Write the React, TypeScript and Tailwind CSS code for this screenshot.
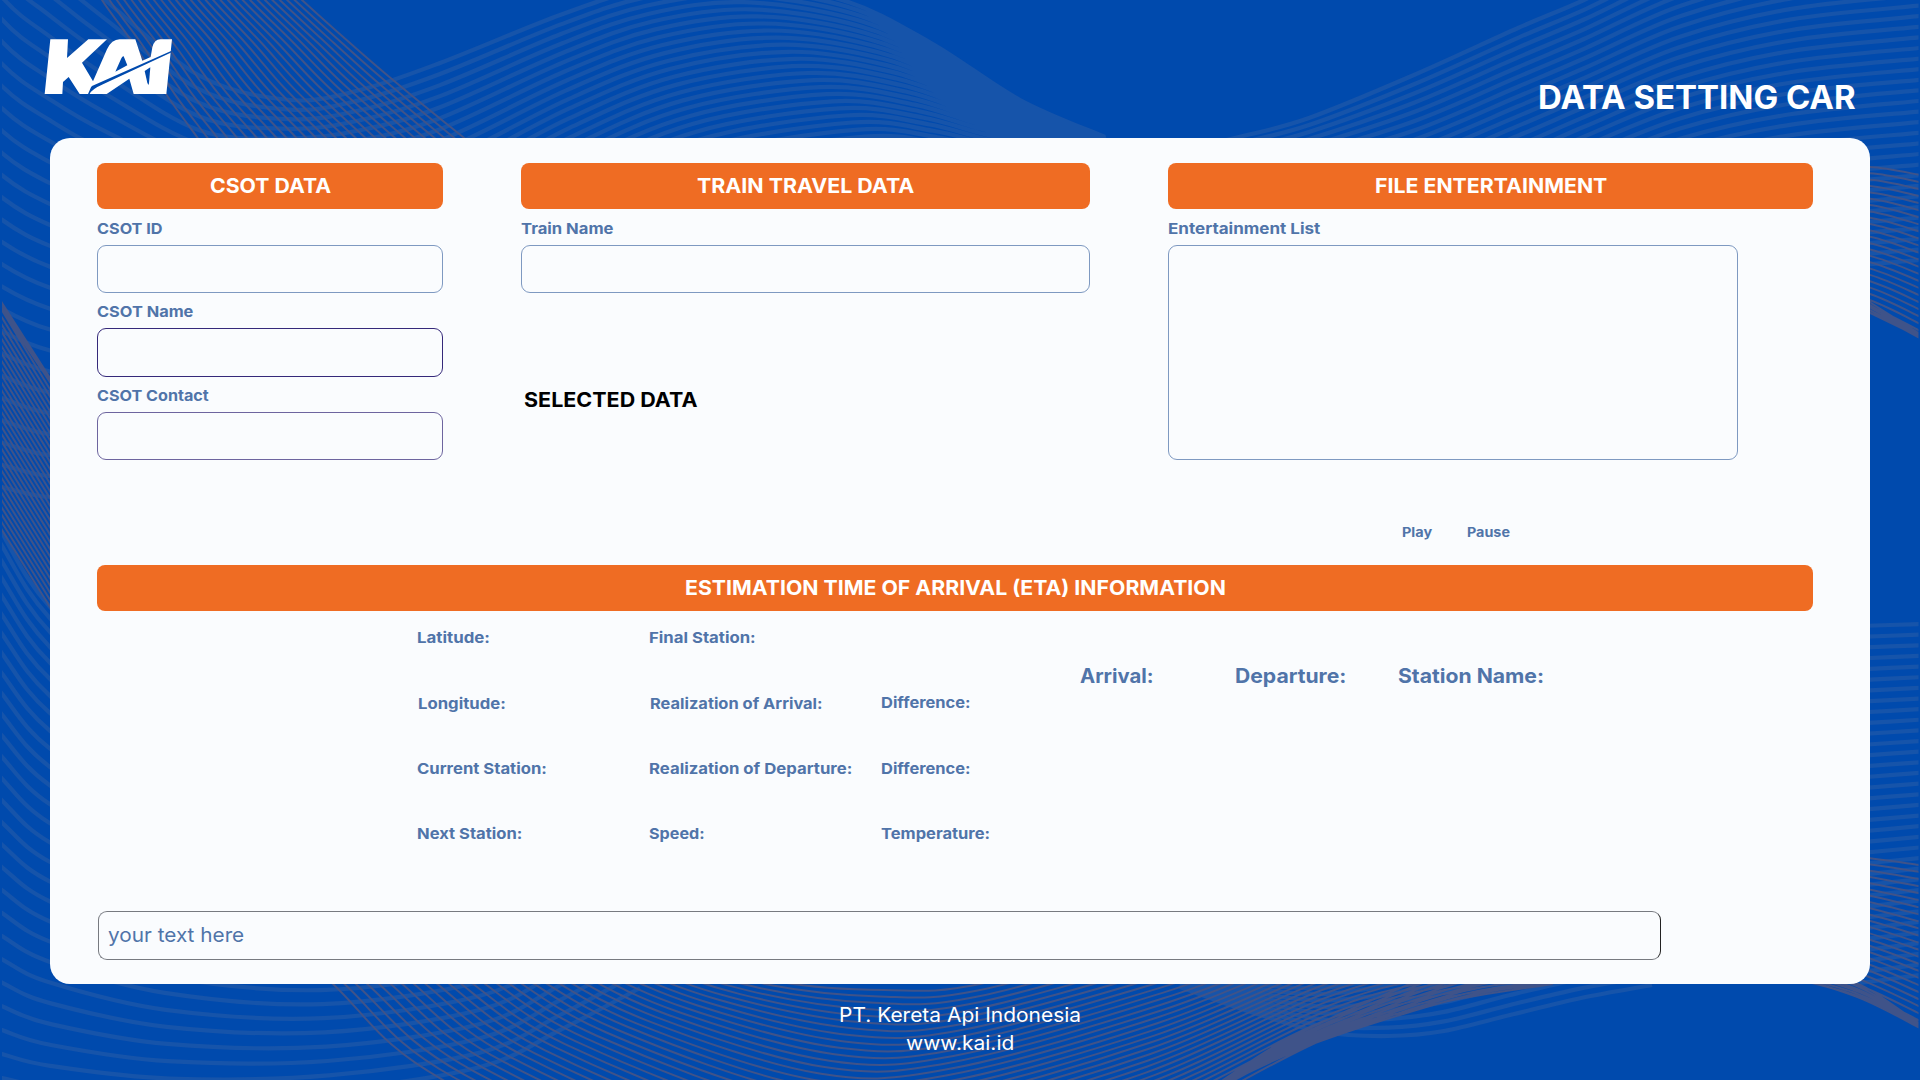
import { useLayoutEffect, useRef } from "react";
import type { ReactNode } from "react";

type Pt = [number, number];

/** Stretches a single line of text so that it fills the width of its box. */
function Fit({ className = "", children }: { className?: string; children: ReactNode }) {
  const box = useRef<HTMLSpanElement>(null);
  const ink = useRef<HTMLSpanElement>(null);
  useLayoutEffect(() => {
    if (!box.current || !ink.current) return;
    const natural = ink.current.offsetWidth;
    if (natural) ink.current.style.transform = `scaleX(${box.current.offsetWidth / natural})`;
  }, []);
  return (
    <span ref={box} className={`block shrink-0 whitespace-nowrap ${className}`}>
      <span ref={ink} className="inline-block origin-left">
        {children}
      </span>
    </span>
  );
}

/** Smooth path through the given points. */
function spline(p: Pt[]): string {
  let d = `M${p[0][0].toFixed(1)} ${p[0][1].toFixed(1)}`;
  for (let i = 0; i < p.length - 1; i++) {
    const a = p[Math.max(i - 1, 0)];
    const b = p[i];
    const c = p[i + 1];
    const e = p[Math.min(i + 2, p.length - 1)];
    d += `C${(b[0] + (c[0] - a[0]) / 6).toFixed(1)} ${(b[1] + (c[1] - a[1]) / 6).toFixed(1)} ${(c[0] - (e[0] - b[0]) / 6).toFixed(1)} ${(c[1] - (e[1] - b[1]) / 6).toFixed(1)} ${c[0].toFixed(1)} ${c[1].toFixed(1)}`;
  }
  return d;
}

/** A family of n + 1 curves blended from curve a to curve b. */
function family(a: Pt[], b: Pt[], n: number, ease = 1): string {
  let d = "";
  for (let i = 0; i <= n; i++) {
    const t = Math.pow(i / n, ease);
    d += spline(a.map((q, k): Pt => [q[0] + (b[k][0] - q[0]) * t, q[1] + (b[k][1] - q[1]) * t]));
  }
  return d;
}

const GRAY = [
  family(
    [[-60, -190], [2, -92], [50, -47], [105, 0], [200, 76], [290, 100], [360, 90], [440, 63], [560, 15], [640, -10], [725, -19], [842, 0], [931, 43], [1020, 100], [1105, 137]],
    [[-60, 472], [2, 487], [50, 497], [110, 490], [200, 430], [290, 350], [360, 352], [440, 350], [580, 260], [720, 195], [890, 165], [960, 170], [1010, 175], [1060, 165], [1110, 160]],
    26,
  ),
  family(
    [[1180, 150], [1239, 137], [1309, 118], [1414, 75], [1518, 28], [1584, 0], [1680, -45], [1790, -75], [1920, -90]],
    [[1180, 340], [1239, 337], [1309, 348], [1414, 380], [1518, 351], [1584, 322], [1680, 292], [1790, 272], [1920, 260]],
    33,
  ),
  family(
    [[-40, 450], [2, 533], [50, 607], [150, 700], [300, 760], [480, 740], [560, 690], [640, 620]],
    [[-40, 1068], [2, 1078], [50, 1087], [170, 1096], [330, 1090], [480, 1067], [560, 1030], [640, 988]],
    26,
    1.15,
  ),
  family(
    [[1180, 955], [1251, 975], [1322, 975], [1388, 960], [1444, 945], [1510, 925], [1581, 912], [1652, 905]],
    [[1180, 987], [1251, 1012], [1322, 1032], [1388, 1036], [1444, 1031], [1510, 1015], [1581, 998], [1652, 985]],
    9,
  ),
  family([[1860, 626], [1920, 624]], [[1860, 983], [1920, 975]], 33),
];

const BROWN = [
  family(
    [[80, -40], [102, 0], [133, 43], [168, 97], [197, 137], [220, 170]],
    [[260, -40], [302, 0], [350, 43], [393, 80], [463, 137], [500, 165]],
    27,
  ),
  family([[-10, 283], [2, 303], [50, 382], [70, 412]], [[-10, 510], [2, 530], [50, 607], [70, 640]], 31),
  family([[2, 303], [50, 378]], [[2, 310], [50, 382]], 3),
  family(
    [[560, 900], [680, 955], [780, 982], [884, 990], [980, 984], [1180, 930], [1322, 890], [1440, 870], [1600, 860]],
    [[240, 890], [333, 984], [443, 1080], [720, 1202], [900, 1200], [1130, 1135], [1322, 1040], [1440, 1003], [1553, 984]],
    33,
  ),
  family(
    [[1180, 1110], [1270, 1049], [1340, 1014], [1405, 986], [1450, 965]],
    [[1200, 1096], [1300, 1049], [1400, 1015], [1480, 993], [1553, 983]],
    9,
  ),
  family([[1810, 170], [1870, 167], [1920, 175]], [[1810, 296], [1870, 313], [1920, 338]], 23),
  family([[1860, 296], [1920, 334]], [[1860, 308], [1920, 337]], 4),
  family([[1790, 850], [1860, 857], [1920, 865]], [[1790, 975], [1860, 998], [1920, 1028]], 23),
  family([[1830, 972], [1870, 990], [1920, 1024]], [[1800, 980], [1860, 997], [1920, 1027]], 5),
];

function Waves() {
  return (
    <svg className="absolute inset-0" width="1920" height="1080" viewBox="0 0 1920 1080" fill="none">
      <clipPath id="inset">
        <rect x="2" y="0" width="1916.5" height="1080" />
      </clipPath>
      <g clipPath="url(#inset)">
        <path d={GRAY.join("")} stroke="#1654aa" strokeWidth="4.2" />
        <path d={BROWN.join("")} stroke="#3f5389" strokeWidth="2" />
      </g>
    </svg>
  );
}

function Logo() {
  return (
    <svg width="132" height="60" viewBox="40 35 396 180" aria-label="KAI">
      <path
        fill="#fff"
        d="M62 42H115L112 98L176 42H232L157 112L190 168L232 72Q246 42 270 42H317L338 106L363 95L368 66Q374 42 392 42H427L410 206H312L299 160L231 206H150L117 155L100 170L98 206H45Z"
      />
      <path fill="#004aad" d="M282 93L293 120L257 139L274 101Q278 91 282 93Z" />
      <path fill="#004aad" d="M345 137L362 126L358 173Q357 184 353 172Z" />
      <path fill="#004aad" d="M175 206L184 186Q186 182 192 180L426 76V81L220 177Q186 192 180 206Z" />
    </svg>
  );
}

function Banner({ fit, children }: { fit: string; children: ReactNode }) {
  return (
    <h2 className="flex h-[46px] w-full items-center justify-center rounded-lg bg-[#ef6c23] text-[20px] font-bold text-white">
      <Fit className={fit}>{children}</Fit>
    </h2>
  );
}

function Field({ label, fit, box, first = false }: { label: string; fit: string; box: string; first?: boolean }) {
  return (
    <label className="block text-[15px] font-bold text-[#5074a9]">
      <span className={`flex items-center ${first ? "h-[36px] pt-1" : "h-[35px] pt-[3px]"}`}>
        <Fit className={fit}>{label}</Fit>
      </span>
      <span className={`block rounded-[9px] border ${box}`} />
    </label>
  );
}

const ETA = [
  ["Latitude:", "w-[73px]", "col-start-1 row-start-1"],
  ["Final Station:", "w-[107px]", "col-start-2 row-start-1"],
  ["Longitude:", "w-[88px]", "col-start-1 row-start-2 pl-px pt-px"],
  ["Realization of Arrival:", "w-[173px]", "col-start-2 row-start-2 pl-px pt-px"],
  ["Difference:", "w-[90px]", "col-start-3 row-start-2"],
  ["Current Station:", "w-[130px]", "col-start-1 row-start-3"],
  ["Realization of Departure:", "w-[203px]", "col-start-2 row-start-3"],
  ["Difference:", "w-[90px]", "col-start-3 row-start-3"],
  ["Next Station:", "w-[105px]", "col-start-1 row-start-4"],
  ["Speed:", "w-[56px]", "col-start-2 row-start-4"],
  ["Temperature:", "w-[109px]", "col-start-3 row-start-4"],
];

export default function App() {
  return (
    <div className="relative h-[1080px] w-[1920px] overflow-hidden bg-[#004aad] font-['Inter',sans-serif]">
      <Waves />
      <div className="relative flex h-full flex-col">
        <header className="flex h-[138px] items-start justify-between pl-[43px] pr-[64px] pt-[37px]">
          <Logo />
          <h1 className="pt-[40px] text-[32px] font-bold leading-[42px] text-white">
            <Fit className="w-[318px]">DATA SETTING CAR</Fit>
          </h1>
        </header>

        <main className="mx-[50px] flex h-[846px] flex-col rounded-[20px] bg-[#fafcfe] pl-[47px] pr-[57px] pt-[25px]">
          <section className="grid h-[402px] shrink-0 grid-cols-[346px_569px_645px] gap-x-[78px]">
            <div>
              <Banner fit="w-[121px]">CSOT DATA</Banner>
              <Field first label="CSOT ID" fit="w-[66px]" box="h-[48px] border-[#7e99c1]" />
              <Field label="CSOT Name" fit="w-[96px]" box="h-[49px] border-[#35297a]" />
              <Field label="CSOT Contact" fit="w-[112px]" box="h-[48px] border-[#6d659f]" />
            </div>
            <div>
              <Banner fit="w-[217px]">TRAIN TRAVEL DATA</Banner>
              <Field first label="Train Name" fit="w-[93px]" box="h-[48px] border-[#7e99c1]" />
              <h3 className="pl-[3px] pt-[92px] text-[20px] font-bold leading-[30px] text-black">
                <Fit className="w-[173px]">SELECTED DATA</Fit>
              </h3>
            </div>
            <div>
              <Banner fit="w-[232px]">FILE ENTERTAINMENT</Banner>
              <Field first label="Entertainment List" fit="w-[152px]" box="h-[215px] w-[570px] border-[#7e99c1]" />
              <div className="flex gap-[35px] pl-[234px] pt-[62px] text-[13px] font-bold leading-[20px] text-[#5074a9]">
                <Fit className="w-[30px]">Play</Fit>
                <Fit className="w-[43px]">Pause</Fit>
              </div>
            </div>
          </section>

          <section className="h-[346px] shrink-0">
            <Banner fit="w-[541px]">ESTIMATION TIME OF ARRIVAL (ETA) INFORMATION</Banner>
            <div className="flex">
              <div className="ml-[320px] mt-[15px] grid auto-rows-[65.3px] grid-cols-[232px_231.5px_199.5px] text-[15px] font-bold leading-[24px] text-[#5074a9]">
                {ETA.map(([text, fit, cell], i) => (
                  <div key={i} className={cell}>
                    <Fit className={fit}>{text}</Fit>
                  </div>
                ))}
              </div>
              <div className="mt-[50px] flex text-[20px] font-bold leading-[30px] text-[#5074a9]">
                <Fit className="w-[73px]">Arrival:</Fit>
                <Fit className="ml-[82px] w-[111px]">Departure:</Fit>
                <Fit className="ml-[52px] w-[146px]">Station Name:</Fit>
              </div>
            </div>
          </section>

          <div className="ml-px flex h-[49px] w-[1563px] shrink-0 items-center rounded-[9px] border border-[#777a80] border-r-[#222] pb-px pl-[9px] text-[20px] text-[#5074a9]">
            <Fit className="w-[136px]">your text here</Fit>
          </div>
        </main>

        <footer className="flex flex-col items-center pt-[17px] text-[20px] leading-[28px] text-white">
          <Fit className="w-[242px]">PT. Kereta Api Indonesia</Fit>
          <Fit className="w-[108px]">www.kai.id</Fit>
        </footer>
      </div>
    </div>
  );
}
